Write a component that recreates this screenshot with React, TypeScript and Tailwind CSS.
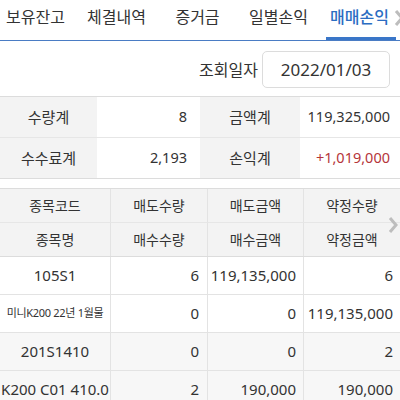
import React from "react";

const tabs = ["보유잔고", "체결내역", "증거금", "일별손익", "매매손익"];

const rows = [
  { a: "105S1", b: "6", c: "119,135,000", d: "6", small: false, shade: false },
  { a: "미니K200 22년 1월물", b: "0", c: "0", d: "119,135,000", small: true, shade: false },
  { a: "201S1410", b: "0", c: "0", d: "2", small: false, shade: true },
  { a: "K200 C01 410.0", b: "2", c: "190,000", d: "190,000", small: false, shade: true },
];

function Chevron({ className }: { className: string }) {
  return (
    <svg className={className} viewBox="0 0 10 18" fill="none">
      <polyline points="2,2 8,9 2,16" stroke="#bdbdbd" strokeWidth="3" strokeLinejoin="miter" />
    </svg>
  );
}

export default function App() {
  return (
    <div
      className="w-[400px] h-[400px] overflow-hidden bg-white text-[#333]"
      style={{ fontFamily: '"Noto Sans", "Noto Sans CJK KR", sans-serif' }}
    >
      {/* tabs */}
      <div className="relative flex h-[41px] border-b border-[#4a7cc4] ml-[-5px]">
        {tabs.map((t, i) => (
          <div
            key={t}
            className={`relative w-[81px] flex justify-center pt-[5px] text-[16px] ${
              i === 4 ? "text-[#2b6dc2] font-medium" : ""
            }`}
          >
            {t}
            {i === 4 && <div className="absolute left-[7px] right-[4px] bottom-0 h-[3px] bg-[#3a76c8]" />}
          </div>
        ))}
        <Chevron className="absolute right-[-4px] top-[9px] w-[10px] h-[18px]" />
      </div>

      {/* date */}
      <div className="flex items-center justify-end h-[55px] pr-[10px] pt-[2px]">
        <span className="text-[16px] mr-[4px]">조회일자</span>
        <div className="w-[128px] h-[37px] rounded-[5px] border border-[#dcdcdc] flex items-center justify-center text-[17px]">
          2022/01/03
        </div>
      </div>

      {/* summary */}
      <div className="grid grid-cols-[97px_103px_100px_100px] border-y border-[#dcdcdc] text-[15px]">
        <div className="h-[41px] bg-[#f3f3f3] flex items-center justify-center border-b border-[#e6e6e6]">수량계</div>
        <div className="h-[41px] flex items-center justify-end pr-[13px] border-b border-[#e6e6e6] text-[14.5px]">8</div>
        <div className="h-[41px] bg-[#f3f3f3] flex items-center justify-center border-b border-[#e6e6e6]">금액계</div>
        <div className="h-[41px] flex items-center justify-end pr-[10px] border-b border-[#e6e6e6] text-[14.5px]">119,325,000</div>
        <div className="h-[40px] bg-[#f3f3f3] flex items-center justify-center">수수료계</div>
        <div className="h-[40px] flex items-center justify-end pr-[13px] text-[14.5px]">2,193</div>
        <div className="h-[40px] bg-[#f3f3f3] flex items-center justify-center">손익계</div>
        <div className="h-[40px] flex items-center justify-end pr-[10px] text-[14.5px] text-[#b5353a]">+1,019,000</div>
      </div>

      {/* grid */}
      <div className="relative mt-[9px] border-t border-[#dcdcdc]">
        <div className="grid grid-cols-[111px_97px_96px_96px] bg-[#f3f3f3] text-[14px] border-b border-[#dcdcdc]">
          {["종목코드", "매도수량", "매도금액", "약정수량"].map((h, i) => (
            <div
              key={h}
              className={`h-[34px] flex items-center justify-center border-b border-[#e6e6e6] ${i < 3 ? "border-r border-r-[#e3e3e3]" : ""}`}
            >
              {h}
            </div>
          ))}
          {["종목명", "매수수량", "매수금액", "약정금액"].map((h, i) => (
            <div
              key={h}
              className={`h-[33px] flex items-center justify-center ${i < 3 ? "border-r border-[#e3e3e3]" : ""}`}
            >
              {h}
            </div>
          ))}
        </div>
        {rows.map((r, idx) => (
          <div
            key={idx}
            className={`grid grid-cols-[111px_97px_96px_96px] h-[38px] border-b border-[#e3e3e3] text-[15px] ${
              r.shade ? "bg-[#f7f7f7]" : "bg-white"
            }`}
          >
            <div
              className={`flex items-center justify-center border-r border-[#e3e3e3] whitespace-nowrap ${
                r.small ? "text-[11px] tracking-[-0.3px]" : ""
              }`}
            >
              {r.a}
            </div>
            <div className="flex items-center justify-end pr-[8px] border-r border-[#e3e3e3]">{r.b}</div>
            <div className="flex items-center justify-end pr-[7px] border-r border-[#e3e3e3]">{r.c}</div>
            <div className="flex items-center justify-end pr-[7px]">{r.d}</div>
          </div>
        ))}
        <Chevron className="absolute right-[2px] top-[27px] w-[10px] h-[18px]" />
      </div>
    </div>
  );
}
